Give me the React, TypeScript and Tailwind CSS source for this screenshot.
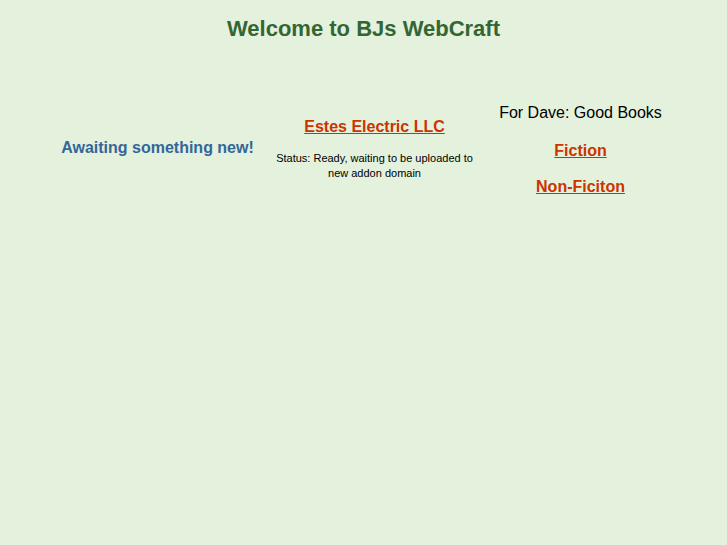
export default function App() {
  return (
    <div className="min-h-[545px] bg-[#e4f1dc] font-['Liberation_Sans',Arial,sans-serif]">
      <h1 className="pt-[16px] text-center text-[22px] font-bold leading-[26px] text-[#336633]">
        Welcome to BJs WebCraft
      </h1>
      <div className="mt-[55px] flex items-center justify-center">
        <div className="flex w-[218px] justify-center">
          <span className="text-[16px] font-bold text-[#336699]">Awaiting something new!</span>
        </div>
        <div className="flex w-[216px] flex-col items-center text-center">
          <a href="#" className="text-[16px] font-bold text-[#cc3300] underline">Estes Electric LLC</a>
          <p className="mt-[12px] w-[210px] text-[11px] leading-[15px] text-black">
            Status: Ready, waiting to be uploaded to new addon domain
          </p>
        </div>
        <div className="flex w-[196px] flex-col items-center pt-[6px] text-center">
          <p className="text-[16px] leading-[20px] text-black">For Dave: Good Books</p>
          <a href="#" className="mt-[16px] text-[16px] font-bold text-[#cc3300] underline">Fiction</a>
          <a href="#" className="mt-[12px] text-[16px] font-bold text-[#cc3300] underline">Non-Ficiton</a>
        </div>
      </div>
    </div>
  );
}
